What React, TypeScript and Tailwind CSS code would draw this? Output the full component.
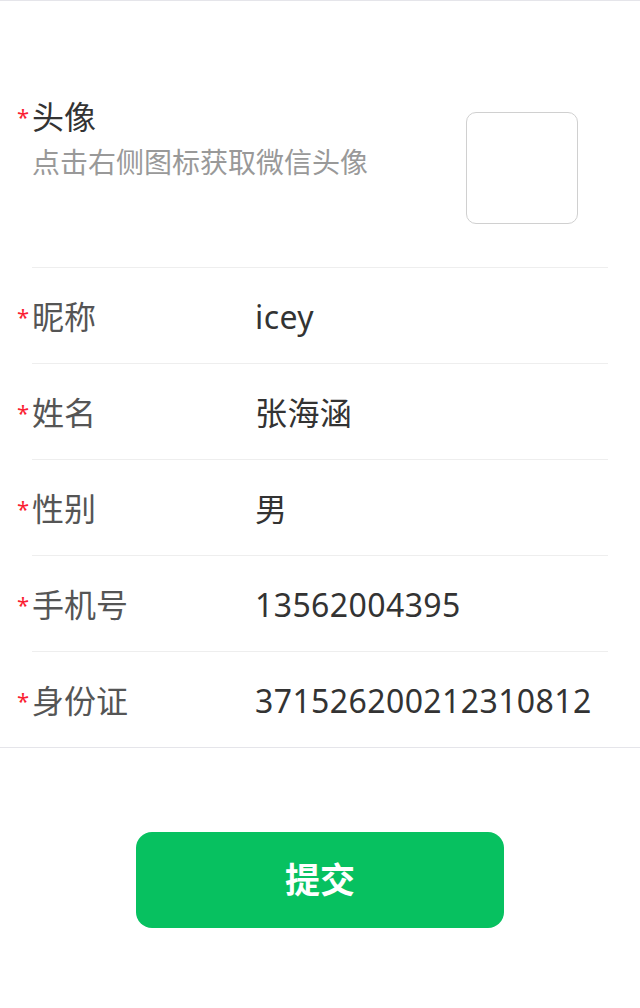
import React from "react";

const font = { fontFamily: '"Noto Sans", "Noto Sans CJK SC", sans-serif' };

const rows = [
  { label: "昵称", value: "icey" },
  { label: "姓名", value: "张海涵" },
  { label: "性别", value: "男" },
  { label: "手机号", value: "13562004395" },
  { label: "身份证", value: "371526200212310812" },
];

function Star() {
  return (
    <span className="w-[16px] shrink-0 text-[22px] leading-none text-[#fa1e32] self-start mt-[10px] pl-[1px]">*</span>
  );
}

export default function App() {
  return (
    <div className="min-h-[1008px] bg-white" style={font}>
      <div className="border-t border-b border-[#e5e5ea]">
        <div className="pl-[16px] pr-[32px] pt-[94px] pb-[43px] flex items-start">
          <Star />
          <div className="flex-1 flex flex-col">
            <div className="text-[32px] leading-[44px] text-[#333]">头像</div>
            <div className="text-[28px] leading-[40px] text-[#999] mt-[3px]">点击右侧图标获取微信头像</div>
          </div>
          <div className="w-[112px] h-[112px] mt-[17px] mr-[30px] border border-[#d0d0d0] rounded-[10px]" />
        </div>
        {rows.map((r, i) => (
          <div key={i}>
            <div className="mx-[32px] border-t border-[#eeeeee]" />
            <div className="h-[95px] pl-[16px] pr-[32px] pt-[3px] flex items-center">
              <div className="flex items-start">
                <Star />
                <div className="w-[223px] shrink-0 text-[32px] leading-[44px] text-[#555]">{r.label}</div>
              </div>
              <div className="flex-1 text-[32px] leading-[44px] text-[#333] tracking-[0.4px]">{r.value}</div>
            </div>
          </div>
        ))}
      </div>
      <div className="flex justify-center pt-[84px]">
        <button className="w-[368px] h-[96px] rounded-[16px] bg-[#07c160] text-white text-[35px] font-bold">
          提交
        </button>
      </div>
    </div>
  );
}
